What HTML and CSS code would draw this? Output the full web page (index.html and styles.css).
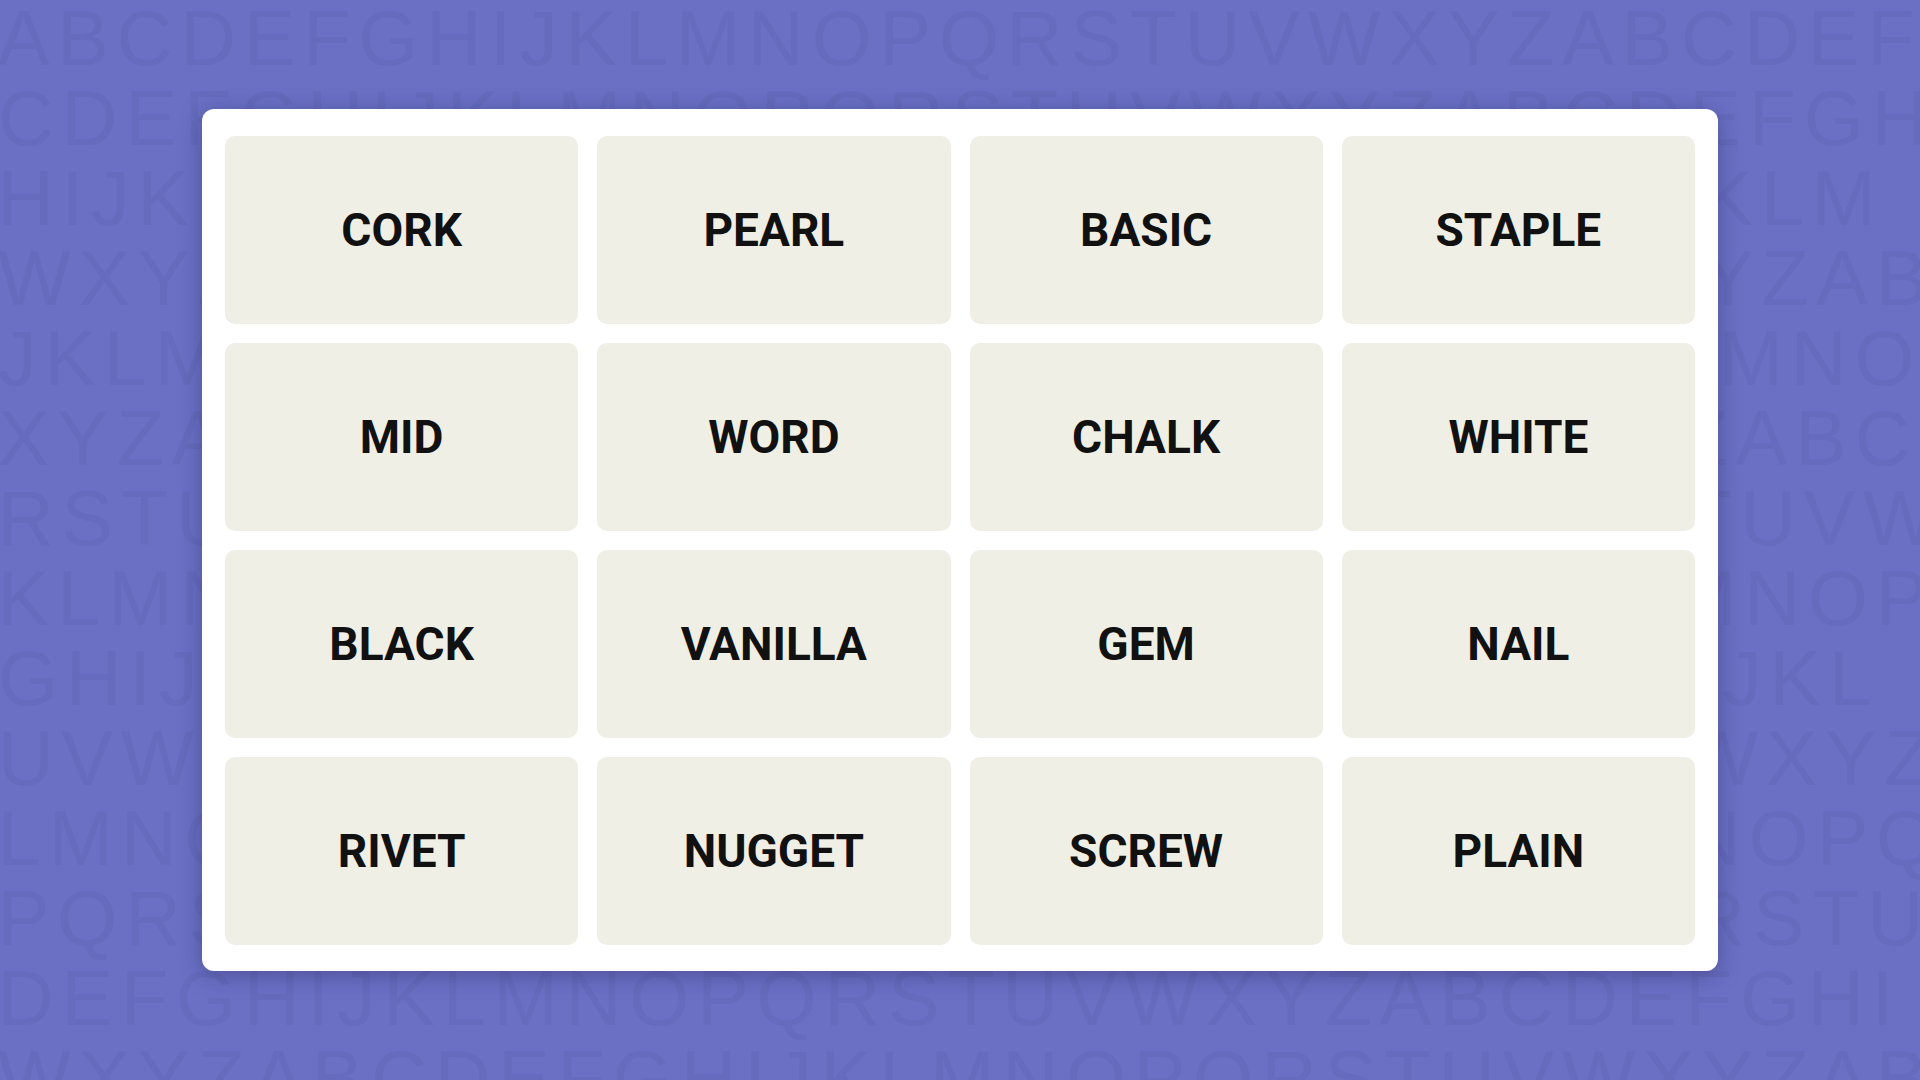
FILE: index.html
```html
<!DOCTYPE html>
<html lang="en">
<head>
    <meta charset="UTF-8">
    <meta name="viewport" content="width=device-width, initial-scale=1">
    <title>Connections</title>
    <link rel="stylesheet" href="styles.css">
</head>
<body>
    <div class="backdrop" aria-hidden="true">
        <div class="letters">ABCDEFGHIJKLMNOPQRSTUVWXYZABCDEF</div>
        <div class="letters">CDEFGHIJKLMNOPQRSTUVWXYZABCDEFGH</div>
        <div class="letters">HIJKLMNOPQRSTUVWXYZABCDEFGHIJKLM</div>
        <div class="letters">WXYZABCDEFGHIJKLMNOPQRSTUVWXYZAB</div>
        <div class="letters">JKLMNOPQRSTUVWXYZABCDEFGHIJKLMNO</div>
        <div class="letters">XYZABCDEFGHIJKLMNOPQRSTUVWXYZABC</div>
        <div class="letters">RSTUVWXYZABCDEFGHIJKLMNOPQRSTUVW</div>
        <div class="letters">KLMNOPQRSTUVWXYZABCDEFGHIJKLMNOP</div>
        <div class="letters">GHIJKLMNOPQRSTUVWXYZABCDEFGHIJKL</div>
        <div class="letters">UVWXYZABCDEFGHIJKLMNOPQRSTUVWXYZ</div>
        <div class="letters">LMNOPQRSTUVWXYZABCDEFGHIJKLMNOPQ</div>
        <div class="letters">PQRSTUVWXYZABCDEFGHIJKLMNOPQRSTU</div>
        <div class="letters">DEFGHIJKLMNOPQRSTUVWXYZABCDEFGHI</div>
        <div class="letters">WXYZABCDEFGHIJKLMNOPQRSTUVWXYZAB</div>
    </div>

    <div class="stage">
        <div class="board">
            <div class="tile">CORK</div>
            <div class="tile">PEARL</div>
            <div class="tile">BASIC</div>
            <div class="tile">STAPLE</div>
            <div class="tile">MID</div>
            <div class="tile">WORD</div>
            <div class="tile">CHALK</div>
            <div class="tile">WHITE</div>
            <div class="tile">BLACK</div>
            <div class="tile">VANILLA</div>
            <div class="tile">GEM</div>
            <div class="tile">NAIL</div>
            <div class="tile">RIVET</div>
            <div class="tile">NUGGET</div>
            <div class="tile">SCREW</div>
            <div class="tile">PLAIN</div>
        </div>
    </div>
</body>
</html>
```

FILE: styles.css
```css
body {
    margin: 0;
    padding: 0;
    width: 1920px;
    height: 1080px;
    overflow: hidden;
    background-color: #6b70c5;
    font-family: "Liberation Sans", Arial, sans-serif;
    position: relative;
}

/* alphabet pattern behind the board */
.backdrop {
    position: absolute;
    inset: 0;
    overflow: hidden;
    margin-top: -2px;
}
.letters {
    white-space: nowrap;
    font-size: 77px;
    line-height: 80px;
    letter-spacing: 8px;
    color: #666bbd;
    margin-left: -2px;
}

.stage {
    position: relative;
    height: 1080px;
    display: flex;
    align-items: center;
    justify-content: center;
}
.board {
    width: 1516px;
    box-sizing: border-box;
    padding: 27px 23px 26px;
    background-color: #ffffff;
    border-radius: 12px;
    box-shadow: 0 4px 22px rgba(30, 30, 80, 0.38);
    display: grid;
    grid-template-columns: repeat(4, 1fr);
    grid-auto-rows: 188px;
    gap: 19px;
}
.tile {
    background-color: #efefe6;
    border-radius: 10px;
    display: flex;
    align-items: center;
    justify-content: center;
    font-family: Roboto, "Liberation Sans", sans-serif;
    font-weight: 700;
    font-size: 46px;
    color: #111111;
}
```
